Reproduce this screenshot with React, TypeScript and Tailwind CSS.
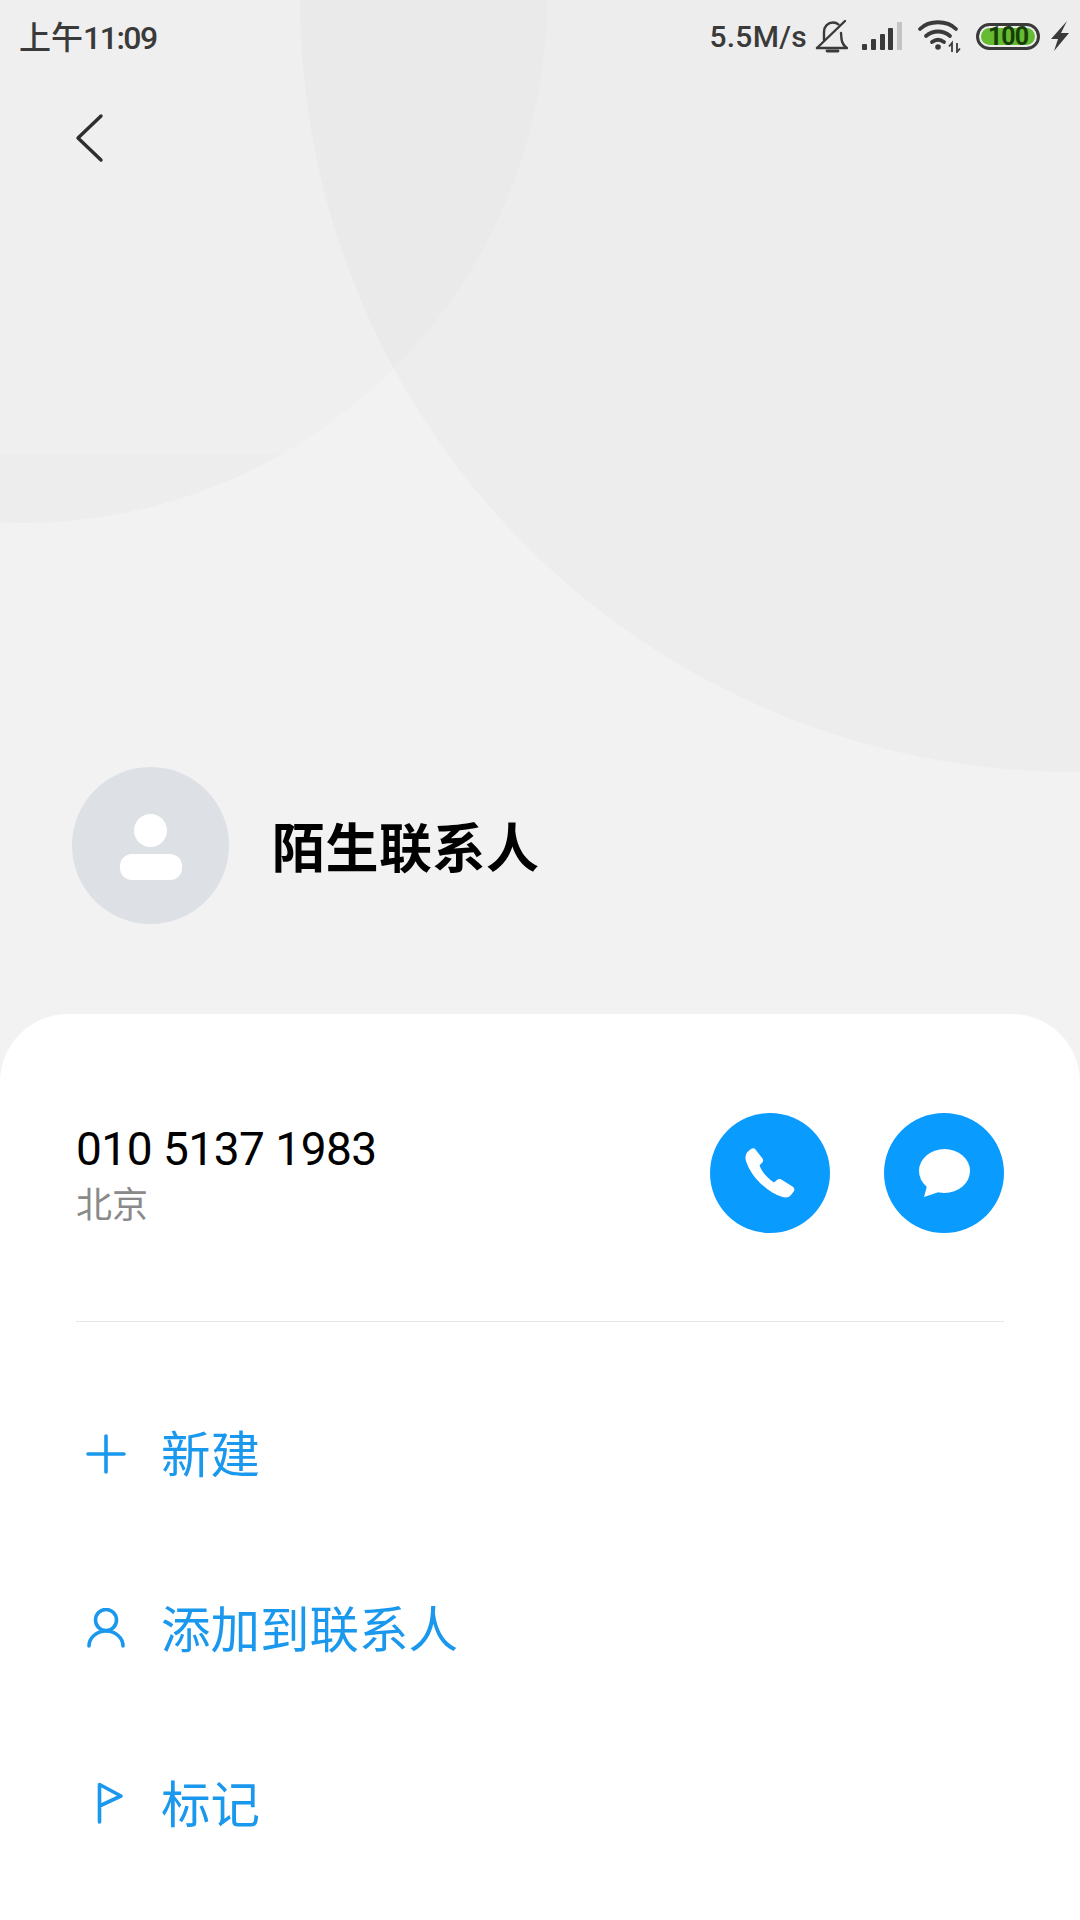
const StatusIcons = () => (
    <div className="flex items-center">
        <span className="mr-[8px] font-['Roboto',sans-serif] text-[30px] font-medium tracking-[0.3px] text-[#3a3a3a]">5.5M/s</span>
        {/* muted bell */}
        <svg width="34" height="34" viewBox="0 0 34 34" fill="none" stroke="#3a3a3a" strokeWidth="2.4" strokeLinecap="round" strokeLinejoin="round">
            <path d="M2 29h30c-3-2-5-5-5.500-9l-.5-6" />
            <path d="M9 21v-8c0-5.500 4-9.500 9-9.500 2 0 4 .5 5.500 2" />
            <path d="M30 2 2 29" />
            <path d="M12 32h11" strokeWidth="2.800" />
        </svg>
        {/* signal */}
        <svg className="ml-[13px]" width="40" height="30" viewBox="0 0 40 30">
            <rect x="0" y="23" width="5" height="6" rx="1" fill="#3a3a3a" />
            <rect x="9" y="18" width="5" height="11" rx="1" fill="#3a3a3a" />
            <rect x="18" y="13" width="5" height="16" rx="1" fill="#3a3a3a" />
            <rect x="26" y="7" width="5" height="22" rx="1" fill="#3a3a3a" />
            <rect x="35" y="1" width="5" height="28" fill="#c4c4c4" />
        </svg>
        {/* wifi */}
        <svg className="ml-[15px]" width="44" height="34" viewBox="0 0 44 34" fill="none" stroke="#3a3a3a" strokeWidth="3.800" strokeLinecap="round">
            <path d="M3 10C12 1 30 1 39 10" />
            <path d="M9 17c7-6 17-6 24 0" />
            <path d="M15 23c4-3 8-3 12 0" />
            <circle cx="21" cy="28" r="2.800" fill="#3a3a3a" stroke="none" />
            <path d="M35 33v-9l-3 3.500M40 24v9l3-3.500" strokeWidth="1.800" strokeLinecap="butt" />
        </svg>
        {/* battery */}
        <div className="ml-[15px] flex h-[27px] w-[64px] items-center justify-center rounded-full border-[3px] border-[#3a3a3a] p-[2px]">
            <div className="flex h-full w-full items-center justify-center rounded-full bg-[#66bb33] font-['Roboto',sans-serif] text-[25px] font-bold leading-none tracking-[-1px] text-[#173f08]">100</div>
        </div>
        <svg className="ml-[10px]" width="20" height="30" viewBox="0 0 20 30">
            <path d="M17 0 1 18h7l-4 12 15-18h-8z" fill="#3a3a3a" />
        </svg>
    </div>
);

const ActionRow = ({ icon, label }: { icon: React.ReactNode, label: string }) => (
    <div className="flex h-[175px] items-center">
        <div className="mr-[25px] flex w-[60px] justify-center">{icon}</div>
        <span className="-mt-[3px] text-[49.500px] font-normal leading-none text-[#1a98ee]">{label}</span>
    </div>
);

export default function App() {
    return (
        <div className="relative h-[1920px] w-[1080px] overflow-hidden bg-[#f2f2f2] font-['Noto_Sans_CJK_SC',sans-serif]">
            {/* background circles */}
            <div className="absolute left-[-503px] top-[-527px] h-[1050px] w-[1050px] rounded-full bg-[linear-gradient(to_bottom,rgba(0,0,0,0.012)_93.4%,rgba(0,0,0,0.02)_93.4%)]"></div>
            <div className="absolute left-[300px] top-[-772px] h-[1544px] w-[1544px] rounded-full bg-black/[0.02]"></div>

            <div className="relative flex h-[1014px] flex-col">
                {/* status bar */}
                <div className="flex h-[72px] items-center justify-between pl-[19px] pr-[10px]">
                    <span className="text-[32px] font-medium leading-none text-[#3a3a3a]">上午<span className="font-['Roboto',sans-serif] tracking-[-1.5px]">11:09</span></span>
                    <StatusIcons />
                </div>

                <div className="pl-[75px] pt-[41px]">
                    <svg width="30" height="52" viewBox="0 0 30 52" fill="none" stroke="#2e2e2e" strokeWidth="3.400" strokeLinecap="round" strokeLinejoin="round">
                        <path d="M26 3 3 25l23 22" />
                    </svg>
                </div>

                {/* contact header */}
                <div className="mt-[602px] flex items-center pl-[72px]">
                    <div className="flex h-[157px] w-[157px] flex-col items-center justify-center gap-[7px] rounded-full bg-[#dde0e5] pt-[2px]">
                        <div className="h-[33px] w-[33px] rounded-full bg-white"></div>
                        <div className="h-[26px] w-[62px] rounded-[12px] bg-white"></div>
                    </div>
                    <h1 className="ml-[43px] text-[53px] font-bold leading-none tracking-[0.5px] text-black">陌生联系人</h1>
                </div>
            </div>

            {/* bottom sheet */}
            <div className="relative h-[906px] rounded-t-[68px] bg-white px-[76px]">
                <div className="flex h-[308px] items-center justify-between border-b border-[#e6e6e6] pt-[11px]">
                    <div className="mt-[4px] flex flex-col">
                        <span className="font-['Roboto',sans-serif] text-[46px] leading-[54px] tracking-[-0.5px] text-black">010 5137 1983</span>
                        <span className="text-[36px] leading-[52px] text-[#8a8a8a]">北京</span>
                    </div>
                    <div className="flex gap-[54px]">
                        <div className="flex h-[120px] w-[120px] items-center justify-center rounded-full bg-[#0a9bff]">
                            <svg width="50" height="50" viewBox="0 0 50 50">
                                <path d="M6 1C7.500-.2 9.500 0 10.500 1.500L17.500 10.500C18.500 12 18.300 13.500 17 14.800L14.500 17.300C16.500 23.500 22.500 30.500 29 34.500L32 32C33.300 31 35 30.800 36.300 31.600L47.500 38.500C49.500 39.800 50 42 48.500 43.800L46 47C44 49.500 41 50 37.500 49C22 44.500 5.500 28 1 13C0 9 .5 6 3 3.500Z" fill="#fff" />
                            </svg>
                        </div>
                        <div className="flex h-[120px] w-[120px] items-center justify-center rounded-full bg-[#0a9bff]">
                            <svg width="51" height="48" viewBox="0 0 51 48" fill="#fff">
                                <ellipse cx="25.500" cy="22" rx="25.500" ry="22" />
                                <path d="M8 37 5 48l15-5z" />
                            </svg>
                        </div>
                    </div>
                </div>

                <div className="pt-[44px]">
                    <ActionRow
                        label="新建"
                        icon={
                            <svg width="40" height="40" viewBox="0 0 40 40" fill="none" stroke="#1a98ee" strokeWidth="3.600" strokeLinecap="round">
                                <path d="M20 2v36M2 20h36" />
                            </svg>
                        }
                    />
                    <ActionRow
                        label="添加到联系人"
                        icon={
                            <svg width="40" height="42" viewBox="0 0 40 42" fill="none" stroke="#1a98ee" strokeWidth="3.600" strokeLinecap="round">
                                <circle cx="20" cy="12" r="10.500" />
                                <path d="M3 38c0-8 7.500-15 17-15s17 7 17 15" />
                            </svg>
                        }
                    />
                    <ActionRow
                        label="标记"
                        icon={
                            <svg width="40" height="44" viewBox="0 0 40 44" fill="none" stroke="#1a98ee" strokeWidth="3.600" strokeLinecap="round" strokeLinejoin="round">
                                <path d="M13.500 40V2.500L35 14 13.500 24" />
                            </svg>
                        }
                    />
                </div>
            </div>
        </div>
    );
}
